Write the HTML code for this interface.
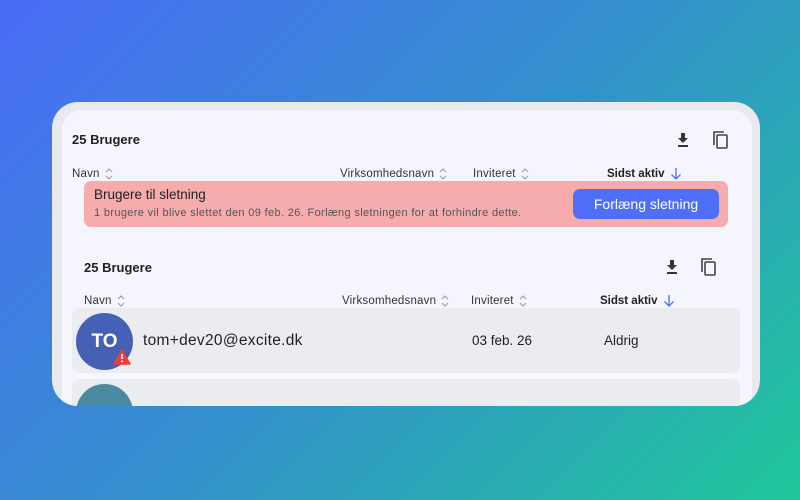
<!DOCTYPE html>
<html><head><style>
*{margin:0;padding:0;box-sizing:border-box}
body{width:800px;height:500px;overflow:hidden;background:linear-gradient(135deg,#4a6cf7 0%,#3490cc 50%,#1fc79a 100%);font-family:"Liberation Sans",sans-serif;position:relative;color:#222}
.card{position:absolute;left:52px;top:102px;width:708px;height:304px;background:#e9eaee;border-radius:26px;overflow:hidden}
.inner{position:absolute;left:10px;top:8px;width:690px;height:320px;background:#f5f6fd;border-radius:20px 20px 0 0;overflow:hidden}
.a{position:absolute;font-size:13px;white-space:nowrap}
.h{font-size:11.5px;color:#333;letter-spacing:0.2px}
.srt{display:inline-block;vertical-align:middle;margin-left:5px}
.banner{position:absolute;left:22px;top:71px;width:644px;height:46px;background:#f6acac;border-radius:7px}
.btn{position:absolute;left:489px;top:8px;width:146px;height:30px;background:#4f6ff9;border-radius:7px;color:#fff;font-size:14px;text-align:center;line-height:30px}
.row{position:absolute;left:10px;width:668px;height:65px;background:#ebecef;border-radius:8px}
.av{position:absolute;left:4px;top:5px;width:57px;height:57px;border-radius:50%;color:#fff;font-size:19px;font-weight:bold;text-align:center;line-height:57px}
</style></head><body>
<div class="card"><div class="inner">
<div class="a" style="left:10px;top:22px;font-size:13px;font-weight:bold">25 Brugere</div>
<svg style="position:absolute;left:614px;top:22px" width="14" height="16" viewBox="0 0 14 16"><path d="M5 1h4v5h3l-5 5-5-5h3z" fill="#333"/><rect x="2" y="13" width="10" height="2" fill="#333"/></svg>
<svg style="position:absolute;left:650px;top:20px" width="18" height="20" viewBox="0 0 18 20"><path d="M2 15V2h10" fill="none" stroke="#444" stroke-width="1.6"/><rect x="5" y="5" width="10" height="13" rx="1" fill="none" stroke="#444" stroke-width="1.6"/></svg>
<div class="a h" style="left:10px;top:57px">Navn<svg class="srt" width="8" height="14" viewBox="0 0 8 14"><path d="M1 5l3-3 3 3M1 9l3 3 3-3" fill="none" stroke="#999" stroke-width="1"/></svg></div>
<div class="a h" style="left:278px;top:57px">Virksomhedsnavn<svg class="srt" width="8" height="14" viewBox="0 0 8 14"><path d="M1 5l3-3 3 3M1 9l3 3 3-3" fill="none" stroke="#999" stroke-width="1"/></svg></div>
<div class="a h" style="left:411px;top:57px">Inviteret<svg class="srt" width="8" height="14" viewBox="0 0 8 14"><path d="M1 5l3-3 3 3M1 9l3 3 3-3" fill="none" stroke="#999" stroke-width="1"/></svg></div>
<div class="a h" style="left:545px;top:57px;font-weight:bold;color:#222;letter-spacing:0">Sidst aktiv<svg class="srt" width="12" height="14" viewBox="0 0 12 14"><path d="M6 1v11M1.5 7.5L6 12l4.5-4.5" fill="none" stroke="#4f6ff9" stroke-width="1.3"/></svg></div>
<div class="banner">
<div class="a" style="left:10px;top:6px;font-size:13.5px;color:#222">Brugere til sletning</div>
<div class="a" style="left:10px;top:26px;font-size:11px;color:#555;letter-spacing:0.35px">1 brugere vil blive slettet den 09 feb. 26. Forlæng sletningen for at forhindre dette.</div>
<div class="btn">Forlæng sletning</div>
</div>
<div class="a" style="left:22px;top:150px;font-size:13px;font-weight:bold">25 Brugere</div>
<svg style="position:absolute;left:603px;top:149px" width="14" height="16" viewBox="0 0 14 16"><path d="M5 1h4v5h3l-5 5-5-5h3z" fill="#333"/><rect x="2" y="13" width="10" height="2" fill="#333"/></svg>
<svg style="position:absolute;left:638px;top:147px" width="18" height="20" viewBox="0 0 18 20"><path d="M2 15V2h10" fill="none" stroke="#444" stroke-width="1.6"/><rect x="5" y="5" width="10" height="13" rx="1" fill="none" stroke="#444" stroke-width="1.6"/></svg>
<div class="a h" style="left:22px;top:184px">Navn<svg class="srt" width="8" height="14" viewBox="0 0 8 14"><path d="M1 5l3-3 3 3M1 9l3 3 3-3" fill="none" stroke="#999" stroke-width="1"/></svg></div>
<div class="a h" style="left:280px;top:184px">Virksomhedsnavn<svg class="srt" width="8" height="14" viewBox="0 0 8 14"><path d="M1 5l3-3 3 3M1 9l3 3 3-3" fill="none" stroke="#999" stroke-width="1"/></svg></div>
<div class="a h" style="left:409px;top:184px">Inviteret<svg class="srt" width="8" height="14" viewBox="0 0 8 14"><path d="M1 5l3-3 3 3M1 9l3 3 3-3" fill="none" stroke="#999" stroke-width="1"/></svg></div>
<div class="a h" style="left:538px;top:184px;font-weight:bold;color:#222;letter-spacing:0">Sidst aktiv<svg class="srt" width="12" height="14" viewBox="0 0 12 14"><path d="M6 1v11M1.5 7.5L6 12l4.5-4.5" fill="none" stroke="#4f6ff9" stroke-width="1.3"/></svg></div>
<div class="row" style="top:198px">
<div class="av" style="background:#4461b5">TO</div>
<svg style="position:absolute;left:41px;top:41px" width="18" height="16" viewBox="0 0 18 16"><path d="M9 1L17 15H1z" fill="#f03c3c" stroke="#f03c3c" stroke-linejoin="round" stroke-width="1.5"/><rect x="8.2" y="5" width="1.6" height="5" fill="#fff"/><rect x="8.2" y="11.5" width="1.6" height="1.6" fill="#fff"/></svg>
<div class="a" style="left:71px;top:24px;font-size:15.5px;color:#222;letter-spacing:0.3px">tom+dev20@excite.dk</div>
<div class="a" style="left:400px;top:25px;font-size:13.5px;color:#222">03 feb. 26</div>
<div class="a" style="left:532px;top:25px;font-size:13.5px;color:#222">Aldrig</div>
</div>
<div class="row" style="top:269px">
<div class="av" style="background:#4a8aa0"></div>
</div>
</div></div>
</body></html>
